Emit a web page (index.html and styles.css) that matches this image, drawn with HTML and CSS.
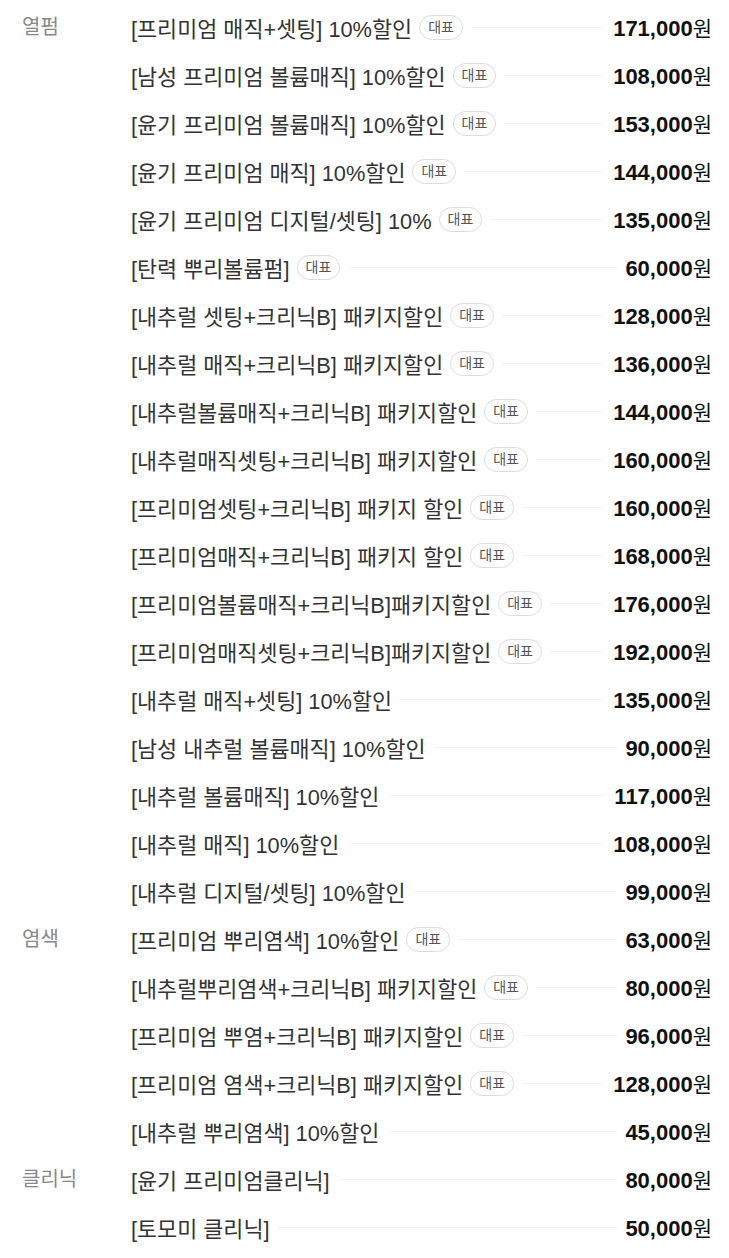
FILE: index.html
```html
<!DOCTYPE html>
<html lang="ko">
<head>
<meta charset="utf-8">
<link rel="stylesheet" href="styles.css">
</head>
<body>
<div class="menu">
  <div class="group">
    <div class="cat">열펌</div>
    <ul class="items">
      <li class="row"><span class="name">[프리미엄 매직+셋팅] 10%할인</span><span class="badge">대표</span><span class="line"></span><span class="price"><b>171,000</b>원</span></li>
      <li class="row"><span class="name">[남성 프리미엄 볼륨매직] 10%할인</span><span class="badge">대표</span><span class="line"></span><span class="price"><b>108,000</b>원</span></li>
      <li class="row"><span class="name">[윤기 프리미엄 볼륨매직] 10%할인</span><span class="badge">대표</span><span class="line"></span><span class="price"><b>153,000</b>원</span></li>
      <li class="row"><span class="name">[윤기 프리미엄 매직] 10%할인</span><span class="badge">대표</span><span class="line"></span><span class="price"><b>144,000</b>원</span></li>
      <li class="row"><span class="name">[윤기 프리미엄 디지털/셋팅] 10%</span><span class="badge">대표</span><span class="line"></span><span class="price"><b>135,000</b>원</span></li>
      <li class="row"><span class="name">[탄력 뿌리볼륨펌]</span><span class="badge">대표</span><span class="line"></span><span class="price"><b>60,000</b>원</span></li>
      <li class="row"><span class="name">[내추럴 셋팅+크리닉B] 패키지할인</span><span class="badge">대표</span><span class="line"></span><span class="price"><b>128,000</b>원</span></li>
      <li class="row"><span class="name">[내추럴 매직+크리닉B] 패키지할인</span><span class="badge">대표</span><span class="line"></span><span class="price"><b>136,000</b>원</span></li>
      <li class="row"><span class="name">[내추럴볼륨매직+크리닉B] 패키지할인</span><span class="badge">대표</span><span class="line"></span><span class="price"><b>144,000</b>원</span></li>
      <li class="row"><span class="name">[내추럴매직셋팅+크리닉B] 패키지할인</span><span class="badge">대표</span><span class="line"></span><span class="price"><b>160,000</b>원</span></li>
      <li class="row"><span class="name">[프리미엄셋팅+크리닉B] 패키지 할인</span><span class="badge">대표</span><span class="line"></span><span class="price"><b>160,000</b>원</span></li>
      <li class="row"><span class="name">[프리미엄매직+크리닉B] 패키지 할인</span><span class="badge">대표</span><span class="line"></span><span class="price"><b>168,000</b>원</span></li>
      <li class="row"><span class="name">[프리미엄볼륨매직+크리닉B]패키지할인</span><span class="badge">대표</span><span class="line"></span><span class="price"><b>176,000</b>원</span></li>
      <li class="row"><span class="name">[프리미엄매직셋팅+크리닉B]패키지할인</span><span class="badge">대표</span><span class="line"></span><span class="price"><b>192,000</b>원</span></li>
      <li class="row"><span class="name">[내추럴 매직+셋팅] 10%할인</span><span class="line"></span><span class="price"><b>135,000</b>원</span></li>
      <li class="row"><span class="name">[남성 내추럴 볼륨매직] 10%할인</span><span class="line"></span><span class="price"><b>90,000</b>원</span></li>
      <li class="row"><span class="name">[내추럴 볼륨매직] 10%할인</span><span class="line"></span><span class="price"><b>117,000</b>원</span></li>
      <li class="row"><span class="name">[내추럴 매직] 10%할인</span><span class="line"></span><span class="price"><b>108,000</b>원</span></li>
      <li class="row"><span class="name">[내추럴 디지털/셋팅] 10%할인</span><span class="line"></span><span class="price"><b>99,000</b>원</span></li>
    </ul>
  </div>
  <div class="group">
    <div class="cat">염색</div>
    <ul class="items">
      <li class="row"><span class="name">[프리미엄 뿌리염색] 10%할인</span><span class="badge">대표</span><span class="line"></span><span class="price"><b>63,000</b>원</span></li>
      <li class="row"><span class="name">[내추럴뿌리염색+크리닉B] 패키지할인</span><span class="badge">대표</span><span class="line"></span><span class="price"><b>80,000</b>원</span></li>
      <li class="row"><span class="name">[프리미엄 뿌염+크리닉B] 패키지할인</span><span class="badge">대표</span><span class="line"></span><span class="price"><b>96,000</b>원</span></li>
      <li class="row"><span class="name">[프리미엄 염색+크리닉B] 패키지할인</span><span class="badge">대표</span><span class="line"></span><span class="price"><b>128,000</b>원</span></li>
      <li class="row"><span class="name">[내추럴 뿌리염색] 10%할인</span><span class="line"></span><span class="price"><b>45,000</b>원</span></li>
    </ul>
  </div>
  <div class="group">
    <div class="cat">클리닉</div>
    <ul class="items">
      <li class="row"><span class="name">[윤기 프리미엄클리닉]</span><span class="line"></span><span class="price"><b>80,000</b>원</span></li>
      <li class="row"><span class="name">[토모미 클리닉]</span><span class="line"></span><span class="price"><b>50,000</b>원</span></li>
    </ul>
  </div>
</div>
</body>
</html>
```

FILE: styles.css
```css
* { box-sizing: border-box; }
html, body { margin: 0; padding: 0; background: #fff; }
body {
  font-family: "Liberation Sans", "Noto Sans CJK KR", sans-serif;
  color: #333;
}
.menu {
  padding: 3px 17px 0 22px;
}
.group {
  display: grid;
  grid-template-columns: 109px 1fr;
}
.cat {
  font-size: 20px;
  color: #888;
  height: 48px;
  line-height: 48px;
}
.items {
  list-style: none;
  margin: 0;
  padding: 0;
}
.row {
  display: flex;
  align-items: center;
  height: 48px;
}
.name {
  font-size: 21.8px;
  color: #333;
  white-space: nowrap;
}
.badge {
  margin-left: 7px;
  height: 25px;
  padding: 0 8px;
  border: 1px solid #dcdcdc;
  border-radius: 13px;
  font-size: 14px;
  color: #555;
  line-height: 23px;
  white-space: nowrap;
}
.line {
  flex: 1;
  height: 1px;
  background: #f3f3f3;
  margin: 0 8px;
}
.price {
  font-size: 21px;
  color: #111;
  white-space: nowrap;
}
.price b {
  font-weight: 700;
  font-size: 22px;
}
```
